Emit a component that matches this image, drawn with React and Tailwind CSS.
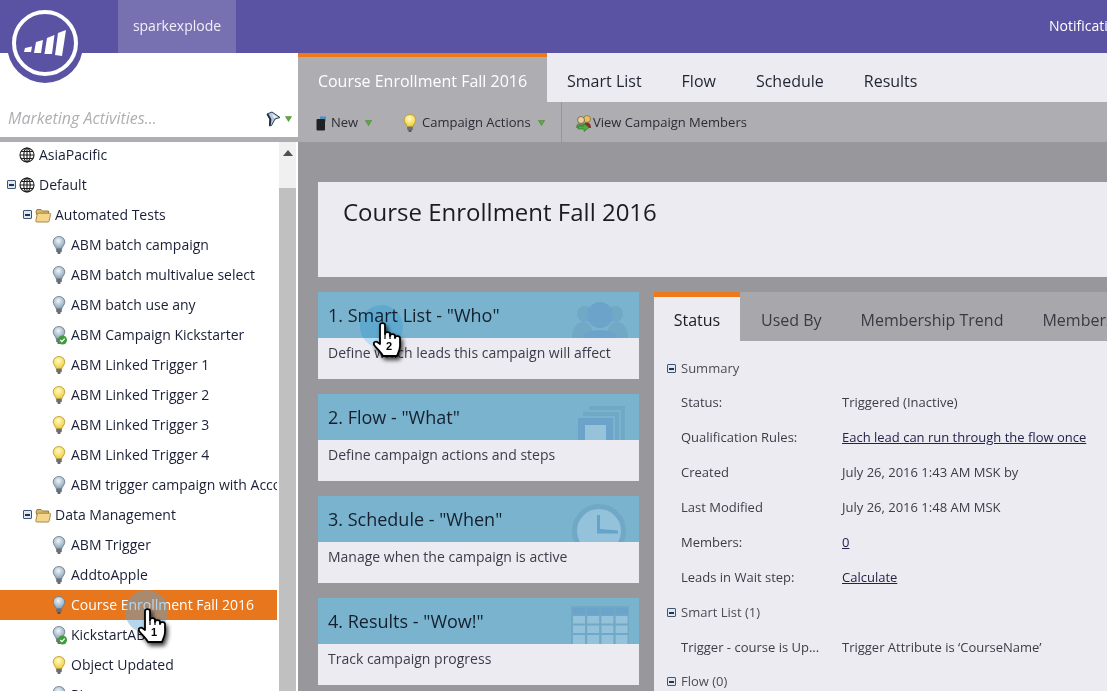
import React from 'react';

const Bulb = ({ color = 'gray', check = false }) => (
    <svg width="16" height="20" viewBox="0 0 16 20" className="flex-shrink-0">
        <defs>
            <radialGradient id="bulbGray" cx="0.45" cy="0.35" r="0.7">
                <stop offset="0" stopColor="#eef4f8" />
                <stop offset="1" stopColor="#7f9bb3" />
            </radialGradient>
            <radialGradient id="bulbYellow" cx="0.45" cy="0.35" r="0.7">
                <stop offset="0" stopColor="#fffbc4" />
                <stop offset="1" stopColor="#efc92f" />
            </radialGradient>
        </defs>
        <path
            d="M8 1.5C4.6 1.5 2.2 3.9 2.2 6.9c0 2.4 1.6 3.7 2.4 5.2.3.6.4 1.1.4 1.6h6c0-.5.1-1 .4-1.6.8-1.5 2.4-2.8 2.4-5.2 0-3-2.4-5.4-5.8-5.4z"
            fill={color === 'yellow' ? 'url(#bulbYellow)' : 'url(#bulbGray)'}
            stroke={color === 'yellow' ? '#b9962a' : '#66788a'}
            strokeWidth="0.8"
        />
        <rect x="5.2" y="13.8" width="5.6" height="3.4" rx="0.8" fill="#6b6f75" />
        <rect x="6.4" y="17.2" width="3.2" height="1.5" rx="0.7" fill="#3c3f44" />
        {check && (
            <>
                <circle cx="11.5" cy="15" r="4.5" fill="#3f9b3c" />
                <path d="M9.3 15l1.6 1.6 2.8-3" fill="none" stroke="#fff" strokeWidth="1.3" />
            </>
        )}
    </svg>
);

const Toggle = () => (
    <span className="w-[9px] h-[9px] border border-[#3e5576] bg-[#dfe6ef] rounded-[1px] flex items-center justify-center flex-shrink-0">
        <span className="w-[5px] h-[2px] bg-[#1f3552]" />
    </span>
);

const GlobeIcon = () => (
    <svg width="16" height="16" viewBox="0 0 16 16" className="flex-shrink-0" fill="none" stroke="#1c1c1c" strokeWidth="1.1">
        <circle cx="8" cy="8" r="7" />
        <ellipse cx="8" cy="8" rx="3.2" ry="7" />
        <path d="M8 1v14M1 8h14M2 4.500h12M2 11.500h12" />
    </svg>
);

const FolderIcon = () => (
    <svg width="16" height="15" viewBox="0 0 16 15" className="flex-shrink-0">
        <path d="M1 4 L2 1.500 H6 L7.500 3 H13.500 V7 H2z" fill="#d9b765" stroke="#8b7238" strokeWidth="0.9" />
        <path d="M.8 12.500 Q.5 14 2 14 H13 Q14 14 14.300 12.500 L15.500 6.500 Q15.700 5.200 14.500 5.200 H3.500 Q2.500 5.200 2.300 6.200z" fill="#f3d68a" stroke="#9c8040" strokeWidth="0.9" />
    </svg>
);

const FunnelIcon = () => (
    <svg width="15" height="16" viewBox="0 0 15 16">
        <path d="M1 3L6 1L14 6.500L9 8L5.500 14.500L3.500 15L4 8z" fill="#b9c9da" stroke="#2a3e58" strokeWidth="1" strokeLinejoin="round" />
        <path d="M1.500 3.200L4.500 8.500L3.800 14.500" fill="none" stroke="#1d2c40" strokeWidth="1.8" />
        <path d="M6 3L11.500 6.300L8 7z" fill="#f2f5f8" />
    </svg>
);

const Arrow = () => (
    <svg width="7" height="6" viewBox="0 0 7 6" className="flex-shrink-0">
        <path d="M0.400 0.400h6.200L3.500 5.600z" fill="#5cab3c" stroke="#3e7f2a" strokeWidth="0.5" />
    </svg>
);

const Hand = ({ n }) => (
    <div className="relative w-[28px] h-[35px] drop-shadow-[2px_3px_2px_rgba(0,0,0,0.75)]">
        <svg width="28" height="35" viewBox="0 0 28 35">
            <path
                d="M7 3C7 .5 12 .5 12 3V12C12 9.500 17 9.500 17 12V14C17 11.500 22 11.500 22 14V15.500C22 13.500 27 13.500 27 16V24C27 28 25 31 24 34H10C8 30 5 28 1.500 23.500C-.5 20.500 2.500 18.500 5 20.500L7 22z"
                fill="#fff"
                stroke="#000"
                strokeWidth="1.8"
                strokeLinejoin="round"
            />
            <path d="M12 12V17M17 13V17M22 14V17" stroke="#000" strokeWidth="1.2" fill="none" />
        </svg>
        <span className="absolute left-[13px] top-[17px] text-[11px] leading-[14px] font-bold text-black font-['Liberation_Sans',sans-serif]">{n}</span>
    </div>
);

const tree = [
    { label: 'AsiaPacific', type: 'globe', indent: 19 },
    { label: 'Default', type: 'globe', indent: 19, toggle: true },
    { label: 'Automated Tests', type: 'folder', indent: 35, toggle: true },
    { label: 'ABM batch campaign', indent: 51 },
    { label: 'ABM batch multivalue select', indent: 51 },
    { label: 'ABM batch use any', indent: 51 },
    { label: 'ABM Campaign Kickstarter', indent: 51, check: true },
    { label: 'ABM Linked Trigger 1', indent: 51, color: 'yellow' },
    { label: 'ABM Linked Trigger 2', indent: 51, color: 'yellow' },
    { label: 'ABM Linked Trigger 3', indent: 51, color: 'yellow' },
    { label: 'ABM Linked Trigger 4', indent: 51, color: 'yellow' },
    { label: 'ABM trigger campaign with Account', indent: 51 },
    { label: 'Data Management', type: 'folder', indent: 35, toggle: true },
    { label: 'ABM Trigger', indent: 51 },
    { label: 'AddtoApple', indent: 51 },
    { label: 'Course Enrollment Fall 2016', indent: 51, selected: true },
    { label: 'KickstartABM', indent: 51, check: true },
    { label: 'Object Updated', indent: 51, color: 'yellow' },
    { label: 'Pierre', indent: 51 },
];

const TreeRow = ({ item }) => (
    <div
        className={`relative h-[30px] flex items-center gap-[4px] whitespace-nowrap overflow-hidden text-[14px] ${
            item.selected ? 'bg-[#e8761c] text-white' : 'text-[#1a1f36]'
        }`}
        style={{ paddingLeft: item.indent }}
    >
        {item.toggle && (
            <span className="absolute top-[10px]" style={{ left: item.indent - 12 }}>
                <Toggle />
            </span>
        )}
        {item.type === 'globe' && <GlobeIcon />}
        {item.type === 'folder' && <FolderIcon />}
        {!item.type && <Bulb color={item.color} check={item.check} />}
        <span className="pb-[2px]">{item.label}</span>
    </div>
);

const cards = [
    { title: '1. Smart List - "Who"', desc: 'Define which leads this campaign will affect', art: 'people' },
    { title: '2. Flow - "What"', desc: 'Define campaign actions and steps', art: 'flow' },
    { title: '3. Schedule - "When"', desc: 'Manage when the campaign is active', art: 'clock' },
    { title: '4. Results - "Wow!"', desc: 'Track campaign progress', art: 'table' },
];

const CardArt = ({ art }) => {
    if (art === 'people') {
        return (
            <svg width="56" height="36" viewBox="0 0 56 36" className="mr-[1px]">
                <circle cx="13" cy="12" r="8" fill="#70a8c6" />
                <circle cx="43" cy="12" r="8" fill="#70a8c6" />
                <path d="M0 36c0-8 4-16 11-16s11 8 11 16z" fill="#70a8c6" />
                <path d="M34 36c0-8 4-16 11-16s11 8 11 16z" fill="#70a8c6" />
                <path d="M11 36c0-4 7-8 17-8s17 4 17 8z" fill="#6ba3ca" />
                <circle cx="28" cy="13" r="13" fill="#6ba3ca" />
            </svg>
        );
    }
    if (art === 'flow') {
        return (
            <svg width="47" height="34" viewBox="0 0 47 34" className="mr-[4px]">
                <path d="M11 0H47V34H43V4H11z" fill="#70a8c6" />
                <path d="M5 6H41V34H37V10H5z" fill="#70a8c6" />
                <rect x="0" y="12" width="35" height="22" fill="#6ba3ca" />
                <rect x="7" y="19" width="21" height="15" fill="#97c3da" />
            </svg>
        );
    }
    if (art === 'clock') {
        return (
            <svg width="54" height="38" viewBox="0 0 54 38" className="mr-[3px]">
                <circle cx="27" cy="27" r="24.500" fill="#93c2da" stroke="#70a8c6" strokeWidth="5" />
                <path d="M25 11h3v14l18 1.500v3H25z" fill="#63a3cc" />
            </svg>
        );
    }
    return (
        <svg width="58" height="38" viewBox="0 0 58 38">
            <rect width="58" height="38" fill="#70a8c6" />
            {[0, 1, 2, 3].map((c) => (
                <g key={c}>
                    <rect x={2 + c * 14.2} y="2" width="12" height="6.500" fill="#6ba3ca" />
                    <rect x={2 + c * 14.2} y="10" width="12" height="7.500" fill="#93c2da" />
                    <rect x={2 + c * 14.2} y="19.500" width="12" height="7.500" fill="#93c2da" />
                    <rect x={2 + c * 14.2} y="29" width="12" height="9" fill="#93c2da" />
                </g>
            ))}
        </svg>
    );
};

const Card = ({ card }) => (
    <div className="h-[87px] bg-[#ecebf2]">
        <div className="relative h-[46px] bg-[#7ab3ce] pl-[10px] flex items-center overflow-hidden">
            <span className="text-[18px] text-[#14202e] whitespace-nowrap">{card.title}</span>
            <div className="absolute right-[10px] bottom-0 flex items-end">
                <CardArt art={card.art} />
            </div>
        </div>
        <div className="pl-[10px] pt-[5px] text-[14px] leading-[20px] text-[#3c3c4a] whitespace-nowrap">{card.desc}</div>
    </div>
);

const SectionHead = ({ label, className }) => (
    <div className={`flex items-center gap-[5px] pl-[13px] h-[17px] text-[13px] text-[#4d4d57] ${className || ''}`}>
        <Toggle />
        <span>{label}</span>
    </div>
);

const DetailRow = ({ label, value, link }) => (
    <div className="flex h-[35px] items-center text-[13px] text-[#3d3d48] whitespace-nowrap">
        <span className="w-[188px] pl-[27px] flex-shrink-0">{label}</span>
        <span className={link ? 'underline text-[#23234a]' : ''}>{value}</span>
    </div>
);

const App = () => {
    return (
        <div className="relative w-full h-screen overflow-hidden flex flex-col font-['Open_Sans',sans-serif] bg-[#98979c]">
            {/* TOP BAR */}
            <div className="h-[53px] bg-[#5a53a3] flex flex-shrink-0 relative">
                <div className="ml-[118px] w-[118px] pb-[2px] bg-[#7871b1] flex items-center justify-center text-[14px] text-[#f0effa]">
                    sparkexplode
                </div>
                <span className="absolute left-[1049px] top-[15px] text-[14px] text-white whitespace-nowrap">Notifications</span>
            </div>

            <div className="flex flex-1 min-h-0">
                {/* LEFT PANEL */}
                <div className="w-[298px] flex-shrink-0 flex flex-col bg-white">
                    <div className="h-[84px] flex items-end justify-between pl-[8px] pr-[6px] pb-[8px] flex-shrink-0">
                        <span className="text-[16px] italic text-[#b0aeb2] leading-[22px]">Marketing Activities...</span>
                        <div className="flex items-center gap-[4px] pb-[2px]">
                            <FunnelIcon />
                            <Arrow />
                        </div>
                    </div>
                    <div className="h-[5px] bg-[#aeadb1] flex-shrink-0" />
                    <div className="flex flex-1 min-h-0">
                        <div className="w-[277px] flex-shrink-0 overflow-hidden -mt-[2px]">
                            {tree.map((item) => (
                                <TreeRow key={item.label} item={item} />
                            ))}
                        </div>
                        <div className="ml-[2px] w-[17px] bg-[#f0f0f0] flex flex-col items-center">
                            <div className="h-[46px] pt-[8px]">
                                <div className="w-0 h-0 border-l-[5px] border-r-[5px] border-b-[6px] border-l-transparent border-r-transparent border-b-[#505050]" />
                            </div>
                            <div className="flex-1 w-full bg-[#c0c0c0]" />
                        </div>
                    </div>
                </div>

                {/* MAIN */}
                <div className="flex-1 min-w-0 flex flex-col">
                    <div className="h-[49px] bg-[#ecebf2] flex flex-shrink-0 text-[16px] text-[#1f2430]">
                        <div className="w-[249px] bg-[#aeadb1] border-t-[4px] border-[#ec7a1c] pt-[2px] flex items-center justify-center text-white">
                            Course Enrollment Fall 2016
                        </div>
                        <div className="flex items-center gap-[40px] pl-[20px] pt-[6px] whitespace-nowrap">
                            <span>Smart List</span>
                            <span>Flow</span>
                            <span>Schedule</span>
                            <span>Results</span>
                        </div>
                    </div>
                    <div className="h-[40px] bg-[#aeadb1] flex items-center flex-shrink-0 text-[13px] text-[#2c2c36] whitespace-nowrap">
                        <div className="flex items-center pl-[18px] pt-[2px] gap-[4px] w-[82px]">
                            <svg width="11" height="15" viewBox="0 0 11 15">
                                <rect x="4" y="0.500" width="6" height="5" fill="#4a90c4" />
                                <rect x="0.500" y="3" width="8.500" height="11.500" rx="1" fill="#222" />
                            </svg>
                            <span>New</span>
                            <span className="ml-[3px]"><Arrow /></span>
                        </div>
                        <div className="flex items-center gap-[2px] w-[182px] h-full border-r border-[#97969b] pl-[22px] pt-[2px]">
                            <Bulb color="yellow" />
                            <span className="ml-[2px]">Campaign Actions</span>
                            <span className="ml-[5px]"><Arrow /></span>
                        </div>
                        <div className="flex items-center pl-[13px] pt-[2px]">
                            <svg width="18" height="18" viewBox="0 0 18 18" className="flex-shrink-0">
                                <circle cx="12" cy="5" r="3.500" fill="#e6c15d" stroke="#7a6a2e" strokeWidth="0.7" />
                                <path d="M8 14c0-4 2-5.500 4-5.500s4 1.500 4 5.500z" fill="#8c2f2f" />
                                <circle cx="6" cy="6" r="3.500" fill="#e9cfa0" stroke="#5d5130" strokeWidth="0.7" />
                                <path d="M1 14c0-4 2-5 5-5s4 1 4 5z" fill="#71816b" />
                                <path d="M3 12h6V9.500l5 4-5 4V15H3z" fill="#4fae3c" stroke="#2c7a25" strokeWidth="0.6" />
                            </svg>
                            <span>View Campaign Members</span>
                        </div>
                    </div>

                    {/* CONTENT */}
                    <div className="flex-1 min-h-0 pl-[20px] pt-[40px] overflow-hidden">
                        <div className="h-[95px] bg-[#ecebf2] pl-[25px] pt-[13px] text-[24px] leading-[34px] text-[#1b1b22] whitespace-nowrap">
                            Course Enrollment Fall 2016
                        </div>
                        <div className="flex gap-[15px] pt-[15px]">
                            <div className="w-[321px] flex-shrink-0 flex flex-col gap-[15px]">
                                {cards.map((card) => (
                                    <Card key={card.title} card={card} />
                                ))}
                            </div>
                            <div className="w-[500px] flex-shrink-0 bg-[#ecebf2] h-[400px]">
                                <div className="h-[49px] bg-[#a8a7ab] flex text-[16px] text-[#3a3a44] whitespace-nowrap">
                                    <div className="w-[86px] bg-[#ecebf2] border-t-[5px] border-[#ec7a1c] pt-[2px] flex items-center justify-center text-[#1b1b22]">
                                        Status
                                    </div>
                                    <div className="flex items-center gap-[39px] pl-[21px] pt-[6px]">
                                        <span>Used By</span>
                                        <span>Membership Trend</span>
                                        <span>Members</span>
                                    </div>
                                </div>
                                <SectionHead label="Summary" className="mt-[19px]" />
                                <div className="mt-[8px]">
                                    <DetailRow label="Status:" value="Triggered (Inactive)" />
                                    <DetailRow label="Qualification Rules:" value="Each lead can run through the flow once" link />
                                    <DetailRow label="Created" value="July 26, 2016 1:43 AM MSK by" />
                                    <DetailRow label="Last Modified" value="July 26, 2016 1:48 AM MSK" />
                                    <DetailRow label="Members:" value="0" link />
                                    <DetailRow label="Leads in Wait step:" value="Calculate" link />
                                </div>
                                <SectionHead label="Smart List (1)" className="mt-[9px]" />
                                <div className="mt-[9px]">
                                    <DetailRow label="Trigger - course is Up..." value="Trigger Attribute is ‘CourseName’" />
                                </div>
                                <SectionHead label="Flow (0)" className="mt-[8px]" />
                            </div>
                        </div>
                    </div>
                </div>
            </div>

            {/* LOGO overlapping the top bar */}
            <div className="absolute left-[7px] top-0 w-[76px] h-[83px] bg-[#5a53a3] rounded-b-[38px] flex items-start justify-center pt-[10px]">
                <div className="w-[66px] h-[66px] rounded-full border-[4px] border-white flex items-center justify-center">
                    <svg width="44" height="26" viewBox="0 0 44 26">
                        <path d="M2 18L9 16.500L8 22L1 22zM13 12L20 10L18 23L11 23zM24 8L31.500 5L29 24L21.500 24zM35 3L43 0L39 26L32 25z" fill="#fff" />
                    </svg>
                </div>
            </div>

            {/* CLICK MARKERS */}
            <div className="absolute left-[125px] top-[590px] w-[43px] h-[43px] rounded-full bg-[#5aa3d8]/45" />
            <div className="absolute left-[138px] top-[608px]"><Hand n="1" /></div>
            <div className="absolute left-[360px] top-[305px] w-[43px] h-[43px] rounded-full bg-[#c7f0ff] mix-blend-multiply" />
            <div className="absolute left-[373px] top-[322px]"><Hand n="2" /></div>
        </div>
    );
};

export default App;
